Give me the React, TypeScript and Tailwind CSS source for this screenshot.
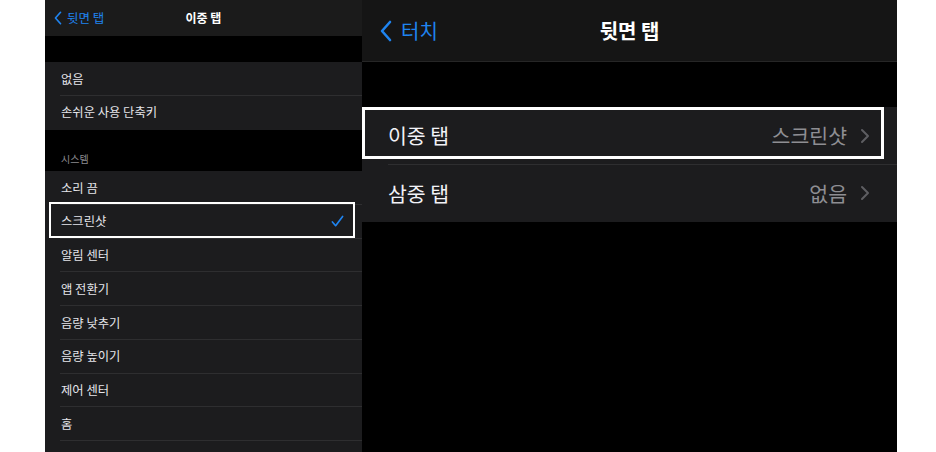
import React from "react";

const font = { fontFamily: '"Noto Sans CJK KR", "Noto Sans", sans-serif' };

function BackChevron({ className }: { className: string }) {
  return (
    <svg viewBox="0 0 12 22" className={className} fill="none">
      <polyline points="10,2 2,11 10,20" stroke="#1f84f0" strokeWidth="2.6" strokeLinecap="round" strokeLinejoin="round" />
    </svg>
  );
}

function Chevron() {
  return (
    <svg viewBox="0 0 10 16" className="w-[10px] h-[16px]" fill="none">
      <polyline points="2,2 8,8 2,14" stroke="#5e5e62" strokeWidth="2" strokeLinecap="round" strokeLinejoin="round" />
    </svg>
  );
}

function LeftRow({ label, last, children }: { label: string; last?: boolean; children?: React.ReactNode }) {
  return (
    <div className="relative h-[33.75px] bg-[#1c1c1e] flex items-center pl-[16px] shrink-0">
      <span className="text-[12.3px] text-[#e5e5ea]">{label}</span>
      {!last && <div className="absolute left-[15px] right-0 bottom-0 h-px bg-[#2e2e30]" />}
      {children}
    </div>
  );
}

export default function App() {
  const systemRows = ["소리 끔", "스크린샷", "알림 센터", "앱 전환기", "음량 낮추기", "음량 높이기", "제어 센터", "홈", "화면 잠금"];
  return (
    <div className="w-[936px] h-[452px] bg-white flex overflow-hidden" style={font}>
      <div className="w-[45px] shrink-0" />
      {/* Left panel */}
      <div className="w-[317px] shrink-0 bg-black flex flex-col">
        <div className="h-[36px] shrink-0 bg-[#1b1b1b] relative flex items-center justify-center">
          <div className="absolute left-[9px] top-0 h-full flex items-center gap-[5px]">
            <BackChevron className="w-[8px] h-[14px]" />
            <span className="text-[12.5px] text-[#1f84f0]">뒷면 탭</span>
          </div>
          <span className="text-[12px] font-bold text-white">이중 탭</span>
        </div>
        <div className="h-[26px] shrink-0" />
        <LeftRow label="없음" />
        <LeftRow label="손쉬운 사용 단축키" last />
        <div className="h-[41.5px] shrink-0 flex items-end pl-[16px] pb-[5px]">
          <span className="text-[10px] text-[#8a8a8e]">시스템</span>
        </div>
        {systemRows.map((r) => (
          <LeftRow key={r} label={r}>
            {r === "스크린샷" && (
              <>
                <svg viewBox="0 0 14 14" className="absolute right-[18px] top-[10px] w-[13px] h-[13px]" fill="none">
                  <polyline points="1.5,7.5 5,11.5 12.5,1.5" stroke="#1f84f0" strokeWidth="1.8" strokeLinecap="round" strokeLinejoin="round" />
                </svg>
                <div className="absolute left-[4px] right-[7px] top-[-3px] bottom-[1px] border-2 border-white" />
              </>
            )}
          </LeftRow>
        ))}
      </div>
      {/* Right panel */}
      <div className="w-[535px] shrink-0 bg-black flex flex-col">
        <div className="h-[62px] shrink-0 bg-[#151515] relative flex items-center justify-center border-b border-[#262626]">
          <div className="absolute left-[18px] top-0 h-full flex items-center gap-[9px]">
            <BackChevron className="w-[12px] h-[22px]" />
            <span className="text-[20px] text-[#1f84f0]">터치</span>
          </div>
          <span className="text-[20px] font-bold text-white">뒷면 탭</span>
        </div>
        <div className="h-[45px] shrink-0" />
        <div className="relative h-[57.5px] shrink-0 bg-[#1c1c1e] flex items-center pl-[26px] pr-[27px]">
          <span className="text-[20.5px] text-[#f2f2f7] flex-1">이중 탭</span>
          <span className="text-[20.5px] text-[#8e8e93] mr-[13px]">스크린샷</span>
          <Chevron />
          <div className="absolute left-[26px] right-0 bottom-0 h-px bg-[#2e2e30]" />
          <div className="absolute left-0 right-[13px] top-0 bottom-[6px] border-[3px] border-white" />
        </div>
        <div className="relative h-[57.5px] shrink-0 bg-[#1c1c1e] flex items-center pl-[26px] pr-[27px]">
          <span className="text-[20.5px] text-[#f2f2f7] flex-1">삼중 탭</span>
          <span className="text-[20.5px] text-[#8e8e93] mr-[13px]">없음</span>
          <Chevron />
        </div>
      </div>
    </div>
  );
}
